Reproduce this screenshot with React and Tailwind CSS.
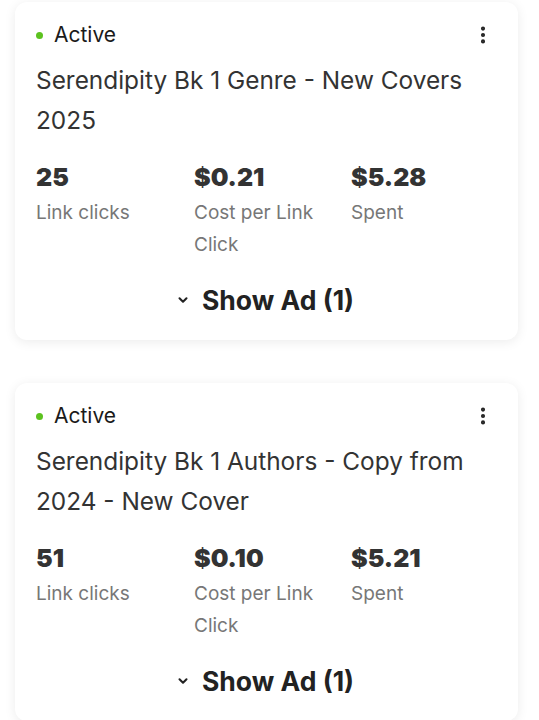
import { ChevronDown, EllipsisVertical } from "lucide-react";

const ads = [
  {
    title: "Serendipity Bk 1 Genre - New Covers 2025",
    clicks: "25",
    cpc: "$0.21",
    spent: "$5.28",
  },
  {
    title: "Serendipity Bk 1 Authors - Copy from 2024 - New Cover",
    clicks: "51",
    cpc: "$0.10",
    spent: "$5.21",
  },
];

const Stat = ({ value, label }) => (
  <div className="flex flex-col">
    <span className="text-[25px] leading-[30px] font-black text-[#333]">{value}</span>
    <span className="mt-[5px] text-[19px] leading-[32px] text-[#777]">{label}</span>
  </div>
);

const AdCard = ({ ad }) => (
  <div className="bg-white rounded-[12px] shadow-[0_2px_12px_rgba(0,0,0,0.08)] pl-[21px] pr-[24px] pt-[19px] pb-[22px]">
    <div className="flex items-center justify-between h-[28px]">
      <div className="flex items-center">
        <span className="w-[7px] h-[7px] rounded-full bg-[#5cc21f]" />
        <span className="ml-[11px] text-[21px] leading-[28px] text-[#1a1a1a]">Active</span>
      </div>
      <EllipsisVertical className="w-[22px] h-[22px] text-[#222]" strokeWidth={2.5} />
    </div>
    <h2 className="mt-[11px] text-[24.4px] leading-[40px] text-[#333] pr-[10px]">{ad.title}</h2>
    <div className="mt-[22px] grid grid-cols-[158px_157px_1fr]">
      <Stat value={ad.clicks} label="Link clicks" />
      <Stat value={ad.cpc} label="Cost per Link Click" />
      <Stat value={ad.spent} label="Spent" />
    </div>
    <div className="mt-[21px] flex items-center justify-center h-[36px]">
      <ChevronDown className="w-[14px] h-[14px] text-[#222]" strokeWidth={3.5} />
      <span className="ml-[12px] text-[26.5px] leading-[36px] font-bold text-[#222]">Show Ad (1)</span>
    </div>
  </div>
);

export default function App() {
  return (
    <div className="min-h-screen bg-white pl-[15px] pr-[21px] pt-[2px] flex flex-col gap-[43px]" style={{ fontFamily: 'Inter, "Liberation Sans", Arial, sans-serif' }}>
      {ads.map((ad) => (
        <AdCard key={ad.title} ad={ad} />
      ))}
    </div>
  );
}
